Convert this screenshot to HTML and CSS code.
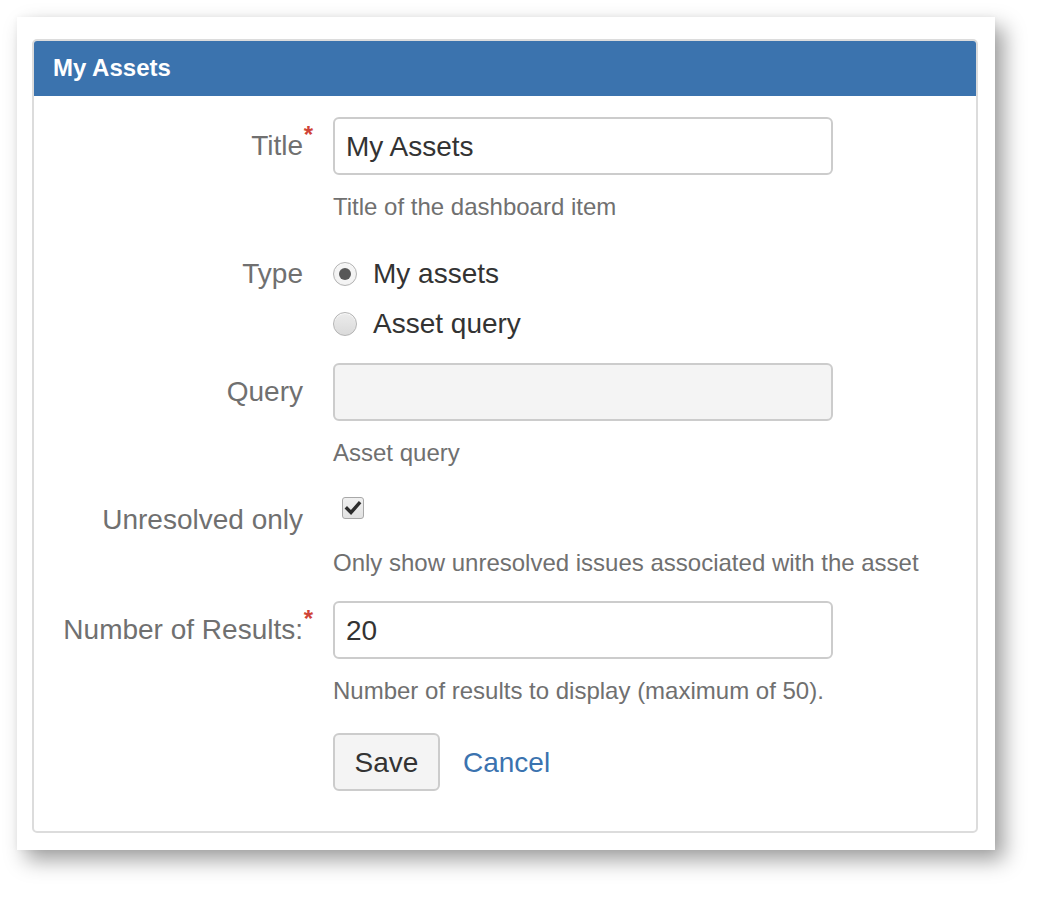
FILE: index.html
```html
<!DOCTYPE html>
<html lang="en">
<head>
<meta charset="utf-8">
<title>My Assets</title>
<link rel="stylesheet" href="styles.css">
</head>
<body>
<div class="card">
  <div class="panel">
    <div class="panel-header">My Assets</div>
    <form class="form">
      <div class="group group-title">
        <label class="label label-input">Title<span class="req">*</span></label>
        <div class="field">
          <div class="input">My Assets</div>
          <div class="help">Title of the dashboard item</div>
        </div>
      </div>

      <div class="group group-type">
        <label class="label label-radio">Type</label>
        <div class="field">
          <div class="radio-row"><span class="radio checked"></span><span class="radio-text">My assets</span></div>
          <div class="radio-row"><span class="radio"></span><span class="radio-text">Asset query</span></div>
        </div>
      </div>

      <div class="group group-query">
        <label class="label label-input">Query</label>
        <div class="field">
          <div class="input disabled"></div>
          <div class="help">Asset query</div>
        </div>
      </div>

      <div class="group group-unresolved">
        <label class="label label-check">Unresolved only</label>
        <div class="field">
          <span class="checkbox">
            <svg viewBox="0 0 22 22" width="22" height="22" aria-hidden="true">
              <path d="M5 11.5 L9 15.5 L17 6.5" fill="none" stroke="#2d2d2d" stroke-width="3.4" stroke-linecap="square" stroke-linejoin="miter"/>
            </svg>
          </span>
          <div class="help help-check">Only show unresolved issues associated with the asset</div>
        </div>
      </div>

      <div class="group group-number">
        <label class="label label-input">Number of Results:<span class="req">*</span></label>
        <div class="field">
          <div class="input">20</div>
          <div class="help">Number of results to display (maximum of 50).</div>
        </div>
      </div>

      <div class="group group-buttons">
        <div></div>
        <div class="buttons">
          <button type="button" class="btn">Save</button>
          <a class="cancel" href="#">Cancel</a>
        </div>
      </div>
    </form>
  </div>
</div>
</body>
</html>
```

FILE: styles.css
```css
html, body {
  margin: 0;
  padding: 0;
  background: #ffffff;
}

body {
  font-family: "Liberation Sans", Arial, sans-serif;
  padding: 17px 0 0 17px;
  min-height: 897px;
  box-sizing: border-box;
}

.card {
  width: 978px;
  height: 833px;
  box-sizing: border-box;
  background: #ffffff;
  padding: 22px 17px 17px 15px;
  box-shadow: 9px 10px 20px rgba(0, 0, 0, 0.38), 0 0 6px rgba(0, 0, 0, 0.04);
}

.panel {
  height: 100%;
  box-sizing: border-box;
  border: 2px solid #dcdcdc;
  border-radius: 5px;
  overflow: hidden;
}

.panel-header {
  height: 55px;
  background: #3b73ae;
  color: #ffffff;
  font-weight: bold;
  font-size: 24px;
  line-height: 53px;
  padding-left: 19px;
}

.form {
  padding: 21px 0 0 0;
}

.group {
  display: grid;
  grid-template-columns: 269px 500px;
  column-gap: 30px;
}

.label {
  position: relative;
  text-align: right;
  color: #707070;
  font-size: 28px;
}

.label-input {
  line-height: 58px;
}

.label-radio {
  line-height: 50px;
}

.label-check {
  line-height: 30px;
  padding-top: 8px;
}

.req {
  position: absolute;
  right: -10px;
  top: 8px;
  color: #d04437;
  font-size: 24px;
  font-weight: bold;
  line-height: 20px;
}

.input {
  height: 58px;
  box-sizing: border-box;
  border: 2px solid #cccccc;
  border-radius: 6px;
  padding-left: 11px;
  font-size: 28px;
  line-height: 55px;
  color: #333333;
  background: #ffffff;
}

.input.disabled {
  background: #f4f4f4;
}

.help {
  margin-top: 17px;
  font-size: 24px;
  line-height: 30px;
  color: #707070;
  white-space: nowrap;
}

.help-check {
  margin-top: 29px;
}

.group-type {
  margin-top: 27px;
}

.group-query {
  margin-top: 14px;
}

.group-unresolved {
  margin-top: 29px;
}

.group-number {
  margin-top: 23px;
}

.group-buttons {
  margin-top: 27px;
}

.radio-row {
  display: flex;
  align-items: center;
  height: 50px;
}

.radio {
  width: 24px;
  height: 24px;
  box-sizing: border-box;
  border-radius: 50%;
  border: 1.5px solid #b4b4b4;
  background: linear-gradient(#ececec, #dadada);
  display: flex;
  align-items: center;
  justify-content: center;
  box-shadow: inset 0 1px 1px rgba(255, 255, 255, 0.8);
}

.radio.checked {
  background: radial-gradient(circle, #f4f4f4 0, #f4f4f4 60%, #e0e0e0 100%);
}

.radio.checked::after {
  content: "";
  width: 12px;
  height: 12px;
  border-radius: 50%;
  background: #575757;
}

.radio-text {
  margin-left: 16px;
  font-size: 28px;
  color: #333333;
}

.checkbox {
  display: block;
  width: 22px;
  height: 22px;
  margin-left: 9px;
  box-sizing: border-box;
  border: 1px solid #a8a8a8;
  border-radius: 3px;
  background: linear-gradient(#f0f0f0, #e2e2e2);
  position: relative;
}

.checkbox svg {
  position: absolute;
  left: -1px;
  top: -1px;
}

.buttons {
  display: flex;
  align-items: center;
  gap: 23px;
}

.btn {
  height: 58px;
  width: 107px;
  box-sizing: border-box;
  border: 2px solid #cccccc;
  border-radius: 6px;
  background: #f4f4f4;
  font-family: "Liberation Sans", Arial, sans-serif;
  font-size: 28px;
  color: #333333;
  padding: 2px 0 0 0;
}

.cancel {
  font-size: 28px;
  color: #3b73af;
  text-decoration: none;
  padding-top: 2px;
}
```
